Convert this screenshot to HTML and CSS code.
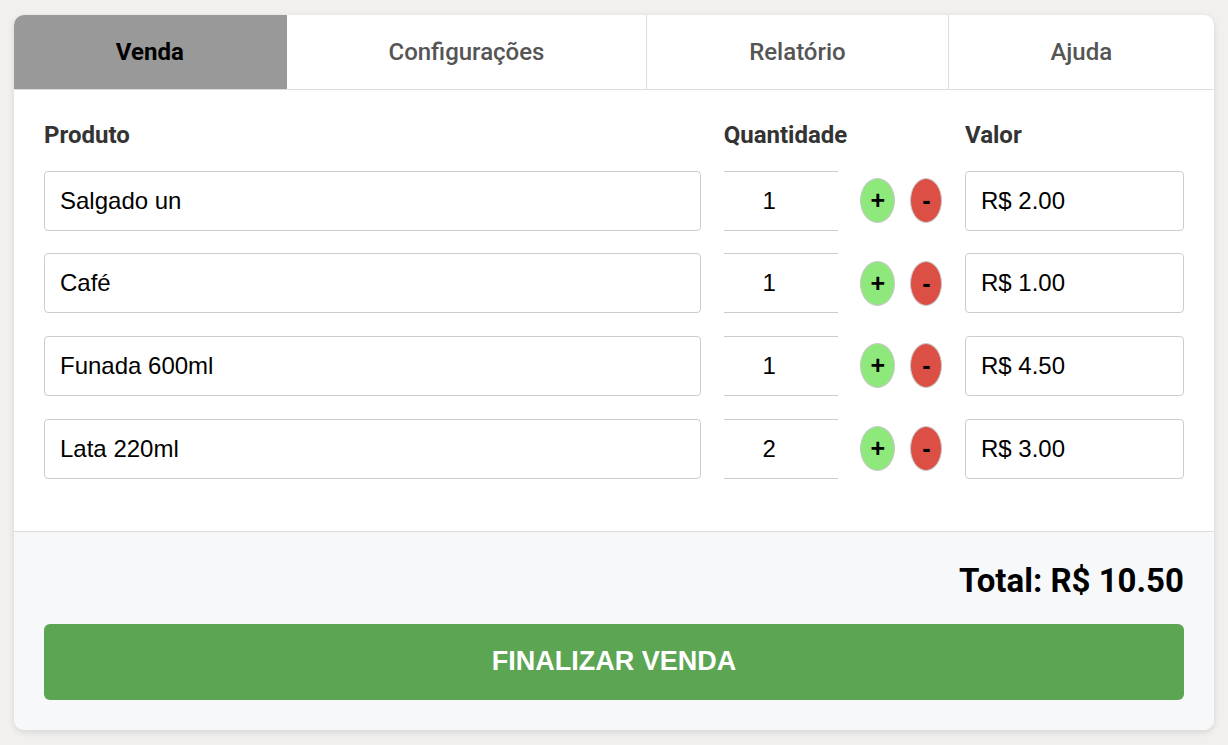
FILE: index.html
```html
<!DOCTYPE html>
<html lang="pt-BR">
<head>
<meta charset="utf-8">
<title>Venda</title>
<link rel="stylesheet" href="styles.css">
</head>
<body>
<div class="card">
  <nav class="tabs">
    <div class="tab active">Venda</div>
    <div class="tab">Configurações</div>
    <div class="tab">Relatório</div>
    <div class="tab">Ajuda</div>
  </nav>
  <section class="content">
    <div class="grid">
      <div class="head">Produto</div>
      <div class="head">Quantidade</div>
      <div class="head"></div>
      <div class="head">Valor</div>

      <div class="field product">Salgado un</div>
      <div class="field qty">1</div>
      <div class="btns"><span class="btn plus">+</span><span class="btn minus">-</span></div>
      <div class="field price">R$ 2.00</div>

      <div class="field product">Café</div>
      <div class="field qty">1</div>
      <div class="btns"><span class="btn plus">+</span><span class="btn minus">-</span></div>
      <div class="field price">R$ 1.00</div>

      <div class="field product">Funada 600ml</div>
      <div class="field qty">1</div>
      <div class="btns"><span class="btn plus">+</span><span class="btn minus">-</span></div>
      <div class="field price">R$ 4.50</div>

      <div class="field product">Lata 220ml</div>
      <div class="field qty">2</div>
      <div class="btns"><span class="btn plus">+</span><span class="btn minus">-</span></div>
      <div class="field price">R$ 3.00</div>
    </div>
  </section>
  <footer class="footer">
    <div class="total">Total: R$ 10.50</div>
    <div class="finish">FINALIZAR VENDA</div>
  </footer>
</div>
</body>
</html>
```
FILE: styles.css
```css
* { box-sizing: border-box; }
html, body { margin: 0; }
body {
  background: #f1f0ee;
  padding: 15px 14px;
  font-family: Roboto, "Liberation Sans", sans-serif;
}
.card {
  width: 1200px;
  background: #fff;
  border-radius: 10px;
  overflow: hidden;
  box-shadow: 0 2px 6px rgba(0,0,0,0.12);
}
.tabs {
  display: flex;
  border-bottom: 1px solid #dddddd;
  height: 75px;
}
.tab {
  flex: auto;
  display: flex;
  align-items: center;
  justify-content: center;
  font-size: 24px;
  font-weight: 500;
  color: #555;
  border-right: 1px solid #dddddd;
}
.tab:last-child { border-right: none; }
.tab.active {
  background: #999999;
  color: #000;
  font-weight: 700;
  border-right-color: #999;
}
.content {
  padding: 30px 30px 52px;
}
.grid {
  display: grid;
  grid-template-columns: 1fr 114px 82px 219px;
  column-gap: 22.67px;
  row-gap: 22.67px;
  grid-template-rows: 28px;
  grid-auto-rows: 60px;
}
.head {
  font-size: 24px;
  font-weight: 700;
  color: #333;
  white-space: nowrap;
  line-height: 30px;
}
.field {
  font-family: "Liberation Sans", Arial, sans-serif;
  font-size: 24px;
  color: #000;
  display: flex;
  align-items: center;
  border: 1px solid #cccccc;
  border-radius: 4px;
  padding: 0 15px;
}
.field.qty {
  justify-content: center;
  border-left: none;
  border-right: none;
  border-radius: 0;
  padding: 0 23px 0 0;
}
.btns {
  display: flex;
  align-items: center;
  justify-content: space-between;
}
.btn {
  height: 45px;
  display: flex;
  align-items: center;
  justify-content: center;
  border-radius: 50%;
  border: 1px solid #c8c8c8;
  font-family: "Liberation Sans", Arial, sans-serif;
  font-size: 25px;
  font-weight: 700;
  color: #000;
}
.btn.plus { width: 35px; background: #8ee87c; }
.btn.minus { width: 32px; background: #dc4f45; }
.footer {
  background: #f7f8fa;
  border-top: 1px solid #dddddd;
  padding: 30px 30px 30px;
}
.total {
  text-align: right;
  font-size: 33px;
  font-weight: 700;
  color: #000;
  line-height: 38px;
  margin-bottom: 24px;
}
.finish {
  height: 76px;
  background: #5ca553;
  border-radius: 6px;
  color: #fff;
  font-family: "Liberation Sans", Arial, sans-serif;
  font-weight: 700;
  font-size: 27px;
  display: flex;
  align-items: center;
  justify-content: center;
}
```
